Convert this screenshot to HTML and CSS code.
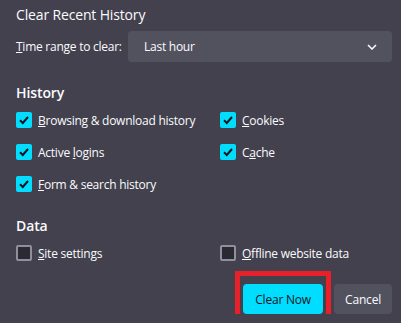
FILE: index.html
```html
<!DOCTYPE html>
<html>
<head>
<meta charset="utf-8">
<link rel="stylesheet" href="styles.css">
</head>
<body>
<div class="dialog">
  <h1 class="title">Clear Recent History</h1>
  <div class="range-row">
    <span class="range-label"><u>T</u>ime range to clear:</span>
    <div class="select">
      <span>Last hour</span>
      <svg class="chev" width="10" height="6" viewBox="0 0 10 6"><path d="M1 1 L5 5 L9 1" fill="none" stroke="#fbfbfe" stroke-width="1.5"/></svg>
    </div>
  </div>
  <h2 class="section">History</h2>
  <div class="grid">
    <label class="item"><span class="box checked"><svg width="16" height="16" viewBox="0 0 16 16"><path d="M4 8.2 L6.8 11 L12 5" fill="none" stroke="#15141a" stroke-width="2"/></svg></span><span><u>B</u>rowsing &amp; download history</span></label>
    <label class="item"><span class="box checked"><svg width="16" height="16" viewBox="0 0 16 16"><path d="M4 8.2 L6.8 11 L12 5" fill="none" stroke="#15141a" stroke-width="2"/></svg></span><span><u>C</u>ookies</span></label>
    <label class="item"><span class="box checked"><svg width="16" height="16" viewBox="0 0 16 16"><path d="M4 8.2 L6.8 11 L12 5" fill="none" stroke="#15141a" stroke-width="2"/></svg></span><span>Active <u>l</u>ogins</span></label>
    <label class="item"><span class="box checked"><svg width="16" height="16" viewBox="0 0 16 16"><path d="M4 8.2 L6.8 11 L12 5" fill="none" stroke="#15141a" stroke-width="2"/></svg></span><span>C<u>a</u>che</span></label>
    <label class="item"><span class="box checked"><svg width="16" height="16" viewBox="0 0 16 16"><path d="M4 8.2 L6.8 11 L12 5" fill="none" stroke="#15141a" stroke-width="2"/></svg></span><span><u>F</u>orm &amp; search history</span></label>
  </div>
  <h2 class="section data">Data</h2>
  <div class="grid">
    <label class="item"><span class="box"></span><span><u>S</u>ite settings</span></label>
    <label class="item"><span class="box"></span><span><u>O</u>ffline website data</span></label>
  </div>
  <div class="buttons">
    <div class="btn-wrap">
      <button class="btn primary">Clear Now</button>
      <div class="highlight"></div>
    </div>
    <button class="btn">Cancel</button>
  </div>
</div>
</body>
</html>
```
FILE: styles.css
```css
html, body {
  margin: 0;
  padding: 0;
  background: #42414d;
  color: #fbfbfe;
  font-family: "Open Sans", "Noto Sans", sans-serif;
  font-size: 12px;
  letter-spacing: -0.25px;
  overflow: hidden;
}
.dialog {
  padding: 5px 9px 0 16px;
}
.title {
  margin: 0;
  font-size: 14px;
  font-weight: 400;
  line-height: 20px;
  letter-spacing: -0.15px;
}
.range-row {
  display: flex;
  align-items: center;
  margin-top: 6px;
}
.range-label {
  width: 112px;
}
.select {
  flex: 1;
  height: 31px;
  background: #52525e;
  border-radius: 4px;
  display: flex;
  align-items: center;
  justify-content: space-between;
  padding: 0 15px 0 16px;
}
.chev {
  display: block;
}
.section {
  margin: 22px 0 0;
  font-size: 14px;
  font-weight: 600;
  line-height: 18px;
  letter-spacing: -0.1px;
}
.section.data {
  margin-top: 25px;
}
.grid {
  display: grid;
  grid-template-columns: 204px 1fr;
  row-gap: 16px;
  margin-top: 10px;
}
.item {
  display: flex;
  align-items: center;
  height: 16px;
  gap: 6px;
  white-space: nowrap;
}
.box {
  width: 16px;
  height: 16px;
  box-sizing: border-box;
  border-radius: 2px;
  background: #2b2a33;
  border: 2px solid #8f8f9d;
  flex: none;
}
.box.checked {
  background: #00ddff;
  border: none;
}
.box svg {
  display: block;
}
.buttons {
  display: flex;
  justify-content: flex-end;
  gap: 11px;
  margin-top: 23px;
}
.btn-wrap {
  position: relative;
}
.btn {
  height: 30px;
  border: none;
  border-radius: 4px;
  background: #52525e;
  color: #fbfbfe;
  font-family: inherit;
  font-size: 12px;
  letter-spacing: -0.2px;
  padding: 0 11px;
  display: block;
}
.btn.primary {
  background: #00ddff;
  color: #15141a;
  width: 80px;
}
.highlight {
  position: absolute;
  left: -8px;
  top: -13px;
  right: -8px;
  bottom: -5px;
  border: 5px solid #e8202a;
}
```
